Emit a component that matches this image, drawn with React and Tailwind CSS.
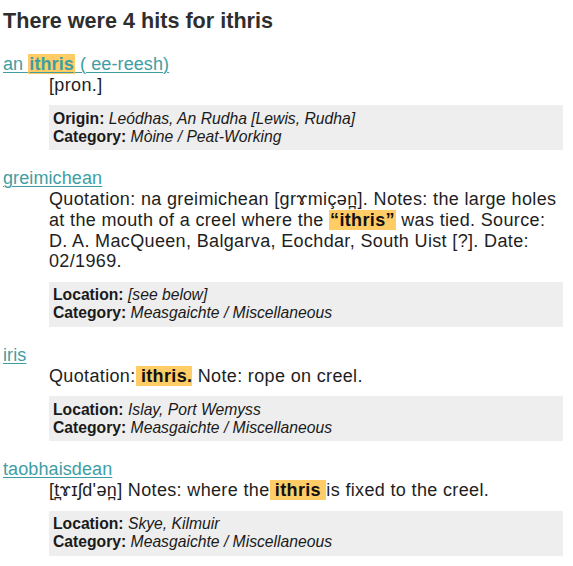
export default function App() {
  const link = "text-[#3f9ea3] underline decoration-1 underline-offset-[2px] tracking-[0.1px]";
  const mark = "bg-[#ffcc66] font-bold";
  const box =
    "mt-[10px] w-[514px] bg-[#eeeeee] px-[4px] py-[4.5px] text-[15.7px] leading-[18px] tracking-normal text-[#1a1a1a]";
  return (
    <div className="min-h-screen bg-white pl-[3px] pt-[8px] font-['Liberation_Sans',Arial,sans-serif] text-[18px] leading-[20.7px] text-[#1e1e1e]">
      <h2 className="text-[21.6px] font-bold leading-[25px] text-[#2e2e2e]">
        There were 4 hits for ithris
      </h2>
      <dl className="mt-[21px] tracking-[0.35px]">
        <dt>
          <a className={link} href="#">
            an <span className={mark + " px-[1px]"}>ithris</span> ( ee-reesh)
          </a>
        </dt>
        <dd className="mb-[18px] ml-[46px]">
          <div>[pron.]</div>
          <div className={box}>
            <div>
              <b>Origin:</b> <i>Leódhas, An Rudha [Lewis, Rudha]</i>
            </div>
            <div>
              <b>Category:</b> <i>Mòine / Peat-Working</i>
            </div>
          </div>
        </dd>

        <dt>
          <a className={link} href="#">
            greimichean
          </a>
        </dt>
        <dd className="mb-[18px] ml-[46px]">
          <div className="w-[514px]">
            Quotation: na greimichean [grɤmiçən̪]. Notes: the large holes at the mouth of a creel
            where the <span className={mark + " px-[1px] text-[#111]"}>“ithris”</span> was tied.
            Source: D. A. MacQueen, Balgarva, Eochdar, South Uist [?]. Date: 02/1969.
          </div>
          <div className={box}>
            <div>
              <b>Location:</b> <i>[see below]</i>
            </div>
            <div>
              <b>Category:</b> <i>Measgaichte / Miscellaneous</i>
            </div>
          </div>
        </dd>

        <dt>
          <a className={link} href="#">
            iris
          </a>
        </dt>
        <dd className="mb-[18px] ml-[46px]">
          <div>
            Quotation:<span className={mark + " text-[#111]"}> ithris.</span> Note: rope on creel.
          </div>
          <div className={box}>
            <div>
              <b>Location:</b> <i>Islay, Port Wemyss</i>
            </div>
            <div>
              <b>Category:</b> <i>Measgaichte / Miscellaneous</i>
            </div>
          </div>
        </dd>

        <dt>
          <a className={link} href="#">
            taobhaisdean
          </a>
        </dt>
        <dd className="mb-[18px] ml-[46px]">
          <div>
            [t̪ɤɪʃd'ən̪] Notes: where the<span className={mark + " text-[#111]"}> ithris </span>is
            fixed to the creel.
          </div>
          <div className={box}>
            <div>
              <b>Location:</b> <i>Skye, Kilmuir</i>
            </div>
            <div>
              <b>Category:</b> <i>Measgaichte / Miscellaneous</i>
            </div>
          </div>
        </dd>
      </dl>
    </div>
  );
}
